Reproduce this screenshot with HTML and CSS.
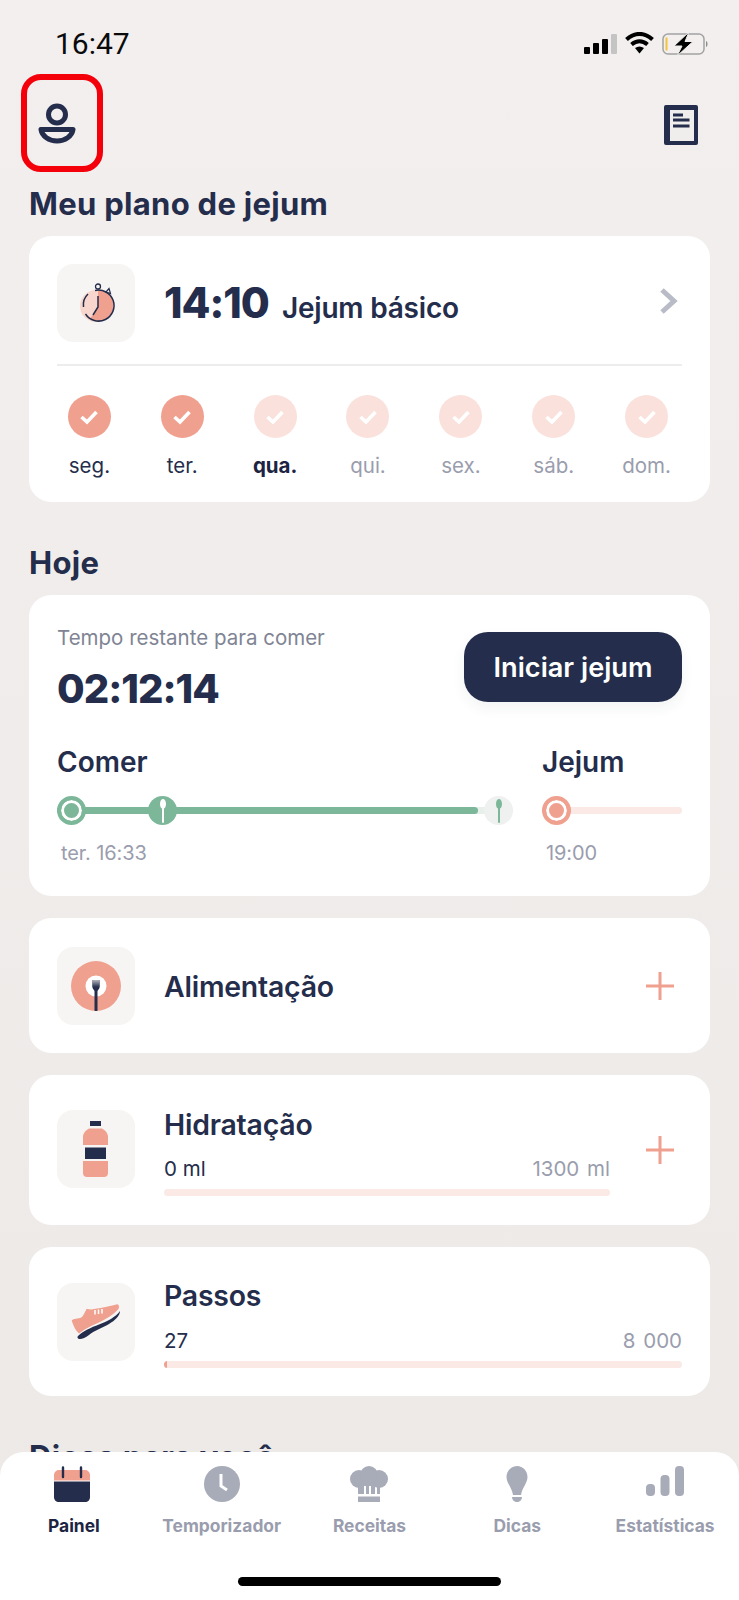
FILE: index.html
```html
<!DOCTYPE html>
<html lang="pt">
<head>
<meta charset="utf-8">
<title>Painel</title>
<link rel="stylesheet" href="styles.css">
</head>
<body>
<div class="screen">
  <div class="status">
    <span class="clock">16:47</span>
    <div class="status-icons">
      <svg class="sig" width="33" height="20" viewBox="0 0 33 20"><rect x="0" y="13" width="6" height="7" rx="1"/><rect x="9" y="9" width="6" height="11" rx="1"/><rect x="18" y="5" width="6" height="15" rx="1"/><rect x="27" y="0" width="6" height="20" rx="1" fill="#c4c4c4"/></svg>
      <svg class="wifi" width="29" height="22" viewBox="0 0 29 22"><path d="M1.500 7.500C9.500 0 19.500 0 27.500 7.500" fill="none" stroke="#000" stroke-width="4"/><path d="M6.500 12.500C11.500 8.300 17.500 8.300 22.500 12.500" fill="none" stroke="#000" stroke-width="4"/><path d="M10 16C13 14 16 14 19 16L14.500 21.500Z"/></svg>
      <svg class="batt" width="47" height="24" viewBox="0 0 47 24"><rect x="1" y="2" width="41" height="20" rx="5" fill="none" stroke="#a3a3a3" stroke-width="1.500"/><rect x="3.500" y="5.500" width="2" height="13" fill="#f5c33b"/><path d="M44 9c2 .5 2 5.500 0 6z" fill="#8c8c8c"/><path d="M27 0 L12 14 H20 L15 24 L31 9.500 H23Z" stroke="#f0eeed" stroke-width="1"/></svg>
    </div>
  </div>

  <div class="topbar">
    <button class="profile" type="button" aria-label="Perfil">
      <svg width="38" height="42" viewBox="0 0 38 42"><circle cx="19" cy="12.500" r="8.500" fill="none" stroke="#242d4b" stroke-width="5"/><path d="M3 27.500H35C34 34 27 39 19 39S4 34 3 27.500Z" fill="none" stroke="#242d4b" stroke-width="5" stroke-linejoin="round"/></svg>
    </button>
    <svg class="book" width="34" height="40" viewBox="0 0 34 40"><rect width="34" height="40" rx="2" fill="#242d4b"/><rect x="6" y="5" width="24" height="31" fill="#f0eeed"/><path d="M9 10H19M9 15H25.500M9 21H25.500" stroke="#242d4b" stroke-width="2.800"/></svg>
  </div>

  <main class="content">
    <h2 class="section first">Meu plano de jejum</h2>
    <section class="card plan">
      <div class="plan-head">
        <div class="tile">
          <svg width="40" height="40" viewBox="0 0 40 40"><circle cx="20" cy="23" r="16" fill="#f8d6ce"/><path d="M22 7a15.500 15.500 0 0 1 0 31 15.500 15.500 0 0 1-8-2.200L22 24Z" fill="#f0a08e"/><path d="M19 7.500A15.500 15.500 0 1 1 9.500 31" fill="none" stroke="#242d4b" stroke-width="1.500"/><path d="M7.500 24A15 15 0 0 1 12 11" fill="none" stroke="#242d4b" stroke-width="1.500"/><path d="M22 13V24L17 32" fill="none" stroke="#242d4b" stroke-width="1.500"/><circle cx="22" cy="3.500" r="2.500" fill="none" stroke="#242d4b" stroke-width="1.300"/><path d="M33 5.500l1.500 5-4.500-1.500z" fill="none" stroke="#242d4b" stroke-width="1.200"/></svg>
        </div>
        <div class="plan-title"><span class="ratio">14:10</span><span class="plan-name">Jejum básico</span></div>
        <svg class="chev" width="20" height="28" viewBox="0 0 20 28"><path d="M4 3L16 14L4 25" fill="none" stroke="#b9bcc7" stroke-width="5"/></svg>
      </div>
      <div class="days">
        <div class="day done"><span class="dot"><svg width="22" height="18" viewBox="0 0 22 18"><path d="M3.500 9L9 14L18.500 4" fill="none" stroke="#fff" stroke-width="3.600"/></svg></span><span class="day-label">seg.</span></div>
        <div class="day done"><span class="dot"><svg width="22" height="18" viewBox="0 0 22 18"><path d="M3.500 9L9 14L18.500 4" fill="none" stroke="#fff" stroke-width="3.600"/></svg></span><span class="day-label">ter.</span></div>
        <div class="day today"><span class="dot"><svg width="22" height="18" viewBox="0 0 22 18"><path d="M3.500 9L9 14L18.500 4" fill="none" stroke="#fff" stroke-width="3.600"/></svg></span><span class="day-label">qua.</span></div>
        <div class="day"><span class="dot"><svg width="22" height="18" viewBox="0 0 22 18"><path d="M3.500 9L9 14L18.500 4" fill="none" stroke="#fff" stroke-width="3.600"/></svg></span><span class="day-label">qui.</span></div>
        <div class="day"><span class="dot"><svg width="22" height="18" viewBox="0 0 22 18"><path d="M3.500 9L9 14L18.500 4" fill="none" stroke="#fff" stroke-width="3.600"/></svg></span><span class="day-label">sex.</span></div>
        <div class="day"><span class="dot"><svg width="22" height="18" viewBox="0 0 22 18"><path d="M3.500 9L9 14L18.500 4" fill="none" stroke="#fff" stroke-width="3.600"/></svg></span><span class="day-label">sáb.</span></div>
        <div class="day"><span class="dot"><svg width="22" height="18" viewBox="0 0 22 18"><path d="M3.500 9L9 14L18.500 4" fill="none" stroke="#fff" stroke-width="3.600"/></svg></span><span class="day-label">dom.</span></div>
      </div>
    </section>

    <h2 class="section">Hoje</h2>
    <section class="card today-card">
      <div class="today-top">
        <div>
          <div class="remain-label">Tempo restante para comer</div>
          <div class="remain">02:12:14</div>
        </div>
        <button class="start" type="button">Iniciar jejum</button>
      </div>
      <div class="phases">
        <div class="phase">
          <div class="phase-title">Comer</div>
          <div class="track eat">
            <div class="fill" style="width:421px"></div>
            <span class="ring ring-eat"></span>
            <span class="knob knob-now"><svg width="8" height="24" viewBox="0 0 8 24"><ellipse cx="4" cy="5" rx="3" ry="5" fill="#fff"/><rect x="3" y="8" width="2" height="16" rx="1" fill="#fff"/></svg></span>
            <span class="knob knob-end"><svg width="8" height="24" viewBox="0 0 8 24"><ellipse cx="4" cy="5" rx="3" ry="5" fill="#7db79a"/><rect x="3" y="8" width="2" height="16" rx="1" fill="#7db79a"/></svg></span>
          </div>
          <div class="phase-time">ter. 16:33</div>
        </div>
        <div class="phase">
          <div class="phase-title">Jejum</div>
          <div class="track fast">
            <span class="ring ring-fast"></span>
          </div>
          <div class="phase-time">19:00</div>
        </div>
      </div>
    </section>

    <section class="card row food">
      <div class="tile">
        <svg width="50" height="50" viewBox="0 0 50 50"><defs><clipPath id="plate"><circle cx="25" cy="25" r="25"/></clipPath><linearGradient id="fork" x1="0" y1="0" x2="0" y2="1"><stop offset="0" stop-color="#b4b5bd"/><stop offset="1" stop-color="#242d4b"/></linearGradient></defs><circle cx="25" cy="25" r="25" fill="#f0a08e"/><circle cx="25" cy="25" r="10.500" fill="#fff"/><g clip-path="url(#plate)"><path d="M21.500 19h7v8l-2 3V50h-3V30l-2-3z" fill="#242d4b"/><path d="M21.500 19h7v7h-7z" fill="url(#fork)"/></g></svg>
      </div>
      <div class="row-body"><div class="row-title">Alimentação</div></div>
      <svg class="plus" width="30" height="30" viewBox="0 0 30 30"><path d="M15 1V29M1 15H29" stroke="#f0a08e" stroke-width="3"/></svg>
    </section>

    <section class="card row stat">
      <div class="tile">
        <svg width="26" height="56" viewBox="0 0 26 56"><rect x="7" y="0" width="11" height="5" fill="#242d4b"/><path d="M6 7.500H19C22 9 25 12 25 16V24H0V16C0 12 3 9 6 7.500Z" fill="#f0a08e"/><rect x="2" y="26.500" width="21" height="11.500" fill="#242d4b"/><path d="M0 40H25V52C25 54.500 23.500 56 21 56H4C1.500 56 0 54.500 0 52Z" fill="#f0a08e"/></svg>
      </div>
      <div class="row-body">
        <div class="row-title">Hidratação</div>
        <div class="values"><span class="val">0 ml</span><span class="goal">1300 ml</span></div>
        <div class="bar"></div>
      </div>
      <svg class="plus" width="30" height="30" viewBox="0 0 30 30"><path d="M15 1V29M1 15H29" stroke="#f0a08e" stroke-width="3"/></svg>
    </section>

    <section class="card row stat steps">
      <div class="tile">
        <svg width="50" height="36" viewBox="0 0 50 36"><path d="M.7 16.300C4 14 9 15 11 13C12.500 11 13.500 9 15.700 4.700C18 5 20 6 23 5C32 4 40 2 46.300 .3C48 .5 48.500 3 47.500 5C42 11 35 15 28 18.500C20 22 13 25 8 29.500C4.700 27 2 21 .7 16.300Z" fill="#f0a08e"/><path d="M7 32C12 27 20 23.500 28 20.500C36 17.500 45 13 49 7C49 11.500 44 16.500 38 20C31 24 24 26 18 31C14 34 10.500 35.500 8 35C6.500 34.500 6 33 7 32Z" fill="#242d4b"/><path d="M24 6V10.500M27.500 5.500V10M31 5V9.500" stroke="#fff" stroke-width="1.500"/></svg>
      </div>
      <div class="row-body">
        <div class="row-title">Passos</div>
        <div class="values"><span class="val">27</span><span class="goal">8 000</span></div>
        <div class="bar"><div class="bar-fill" style="width:3px"></div></div>
      </div>
    </section>

    <h2 class="section">Dicas para você</h2>
  </main>

  <nav class="tabs">
    <div class="tab active">
      <svg class="tab-cal" width="36" height="36" viewBox="0 0 36 36"><path d="M5 4H31C33.500 4 36 6 36 9V14.500H0V9C0 6 2.500 4 5 4Z" fill="#f0a08e"/><path d="M0 15.500H36V31C36 34 34 36 31 36H5C2 36 0 34 0 31Z" fill="#242d4b"/><path d="M9 1.500V11M27 1.500V11" stroke="#242d4b" stroke-width="2.400" stroke-linecap="round"/></svg>
      <span>Painel</span>
    </div>
    <div class="tab">
      <svg width="36" height="36" viewBox="0 0 36 36"><circle cx="18" cy="18" r="18" fill="#a8abb8"/><path d="M17 8V20L23 24" fill="none" stroke="#fff" stroke-width="3"/></svg>
      <span>Temporizador</span>
    </div>
    <div class="tab">
      <svg width="38" height="36" viewBox="0 0 38 36"><circle cx="9" cy="13" r="9" fill="#a8abb8"/><circle cx="29" cy="13" r="9" fill="#a8abb8"/><circle cx="19" cy="9" r="9" fill="#a8abb8"/><path d="M8 17H30V28H27V20H25V28H21V20H19V28H16V20H14V28H8Z" fill="#a8abb8"/><rect x="8" y="30.500" width="22" height="5.500" fill="#a8abb8"/></svg>
      <span>Receitas</span>
    </div>
    <div class="tab">
      <svg width="22" height="36" viewBox="0 0 22 36"><path d="M11 0C17 0 21.500 5 21.500 11C21.500 17 16 22 15 29H7C6 22 .5 17 .5 11C.5 5 5 0 11 0Z" fill="#a8abb8"/><path d="M6 31H16C16 34 13.500 36 11 36C8.500 36 6 34 6 31Z" fill="#a8abb8"/></svg>
      <span>Dicas</span>
    </div>
    <div class="tab">
      <svg width="38" height="36" viewBox="0 0 38 36"><rect x="0" y="18" width="9" height="12" rx="4" fill="#a8abb8"/><rect x="14.500" y="9" width="9" height="21" rx="4" fill="#a8abb8"/><rect x="29" y="0" width="9" height="30" rx="4" fill="#a8abb8"/></svg>
      <span>Estatísticas</span>
    </div>
    <div class="home"></div>
  </nav>
</div>
</body>
</html>
```
FILE: styles.css
```css
* { box-sizing: border-box; }
html, body { margin: 0; padding: 0; }
body { font-family: Inter, "Noto Sans", sans-serif; color: #242d4b; }
button { font: inherit; }

.screen {
  position: relative;
  width: 739px;
  height: 1600px;
  overflow: hidden;
  background: linear-gradient(#f2efee, #ece9e7);
}

.status {
  height: 74px;
  display: flex;
  justify-content: space-between;
  padding: 26px 30px 0 55px;
}
.clock { font-size: 30px; line-height: 36px; font-weight: 400; color: #0b0b0b; font-family: Roboto, sans-serif; }
.status-icons { display: flex; align-items: flex-start; padding-top: 8px; gap: 8px; }
.wifi { margin-top: -2px; }
.batt { margin-top: -2px; }

.topbar {
  height: 98px;
  display: flex;
  justify-content: space-between;
  align-items: center;
  padding: 0 41px 0 21px;
}
.profile {
  width: 82px;
  height: 98px;
  background: none;
  border: 6px solid #f4000b;
  border-radius: 20px;
  padding: 0 10px 0 0;
  display: flex;
  align-items: center;
  justify-content: center;
}
.book { margin-top: 3px; }

.content { padding: 0 29px; }

.section {
  margin: 43px 0 14px;
  font-size: 31px;
  line-height: 36px;
  font-weight: 700;
  letter-spacing: 0.3px;
  color: #242d4b;
}
.section.first { margin-top: 14px; }

.card {
  background: #fff;
  border-radius: 22px;
  padding: 28px;
}

.tile {
  width: 78px;
  height: 78px;
  flex: none;
  border-radius: 16px;
  background: #f7f5f4;
  display: flex;
  align-items: center;
  justify-content: center;
}

.plan { height: 266px; }
.plan-head {
  display: flex;
  align-items: center;
  padding-bottom: 22px;
  border-bottom: 2px solid #eeeded;
}
.plan-title { flex: 1; margin-left: 29px; display: flex; align-items: baseline; gap: 13px; }
.ratio { font-size: 42px; line-height: 54px; font-weight: 800; letter-spacing: -1px; }
.plan-name { font-size: 28px; font-weight: 600; letter-spacing: -0.2px; }
.chev { margin: -5px 4px 0 0; }

.days {
  display: grid;
  grid-template-columns: repeat(7, 1fr);
  margin: 0 -11px 0 -14px;
  padding-top: 29px;
}
.day { display: flex; flex-direction: column; align-items: center; gap: 16px; }
.dot {
  width: 43px;
  height: 43px;
  border-radius: 50%;
  background: #fae1dc;
  display: flex;
  align-items: center;
  justify-content: center;
}
.day.done .dot { background: #f0a08e; }
.day-label { font-size: 20.5px; line-height: 24px; color: #9a9dad; }
.day.done .day-label { color: #242d4b; }
.day.today .day-label { color: #1c2442; font-weight: 700; }

.today-card { margin-top: 0; padding-top: 30px; height: 301px; }
.today-top { display: flex; justify-content: space-between; align-items: flex-start; }
.remain-label { font-size: 20.5px; line-height: 26px; color: #7f8494; }
.remain { margin-top: 13px; font-size: 40px; line-height: 50px; font-weight: 800; letter-spacing: -1px; }
.start {
  margin-top: 7px;
  width: 218px;
  height: 70px;
  border: 0;
  border-radius: 24px;
  background: #242d4b;
  color: #fff;
  font-size: 27.200px;
  font-weight: 600;
  box-shadow: 0 6px 14px rgba(36, 45, 75, 0.06);
}
.phases { display: grid; grid-template-columns: 456px 140px; gap: 29px; margin-top: 32px; }
.phase-title { font-size: 28px; line-height: 32px; font-weight: 600; }
.track { position: relative; height: 29px; margin-top: 18px; }
.track::before {
  content: "";
  position: absolute;
  left: 0;
  right: 0;
  top: 11px;
  height: 7px;
  border-radius: 4px;
  background: #fbe9e6;
}
.track.eat::before { background: #e9f0ec; }
.fill { position: absolute; left: 0; top: 11px; height: 7px; border-radius: 4px; background: #7db79a; }
.ring {
  position: absolute;
  left: 0;
  top: 0;
  width: 29px;
  height: 29px;
  border-radius: 50%;
  background: #7db79a;
  border: 4px solid #7db79a;
  box-shadow: inset 0 0 0 3px #fff;
}
.ring-fast { background: #f0a08e; border-color: #f0a08e; }
.knob {
  position: absolute;
  top: 0;
  width: 29px;
  height: 29px;
  border-radius: 50%;
  display: flex;
  align-items: center;
  justify-content: center;
}
.knob-now { left: 91px; background: #7db79a; }
.knob-end { right: 0; background: #eef1ef; }
.phase-time { margin-top: 16px; padding-left: 4px; font-size: 20px; line-height: 24px; letter-spacing: -0.1px; color: #9a9dad; }

.row { display: flex; align-items: flex-start; margin-top: 22px; }
.row-body { flex: 1; margin-left: 29px; }
.row-title { font-size: 28.400px; line-height: 34px; font-weight: 600; letter-spacing: -0.2px; }
.plus { flex: none; margin-left: 35px; margin-right: 7px; }

.food { height: 135px; padding-top: 28px; align-items: center; padding-bottom: 28px; }
.food .row-title { margin-top: 3px; }

.stat { height: 150px; padding-top: 33px; }
.stat .tile { margin-top: 2px; }
.stat .plus { margin-top: 27px; }
.values { display: flex; justify-content: space-between; margin-top: 15px; font-size: 20.5px; line-height: 24px; }
.val { color: #242d4b; }
.goal { color: #9a9dad; word-spacing: 2px; }
.bar { margin-top: 8px; height: 7px; border-radius: 4px; background: #fbe9e6; overflow: hidden; }
.bar-fill { height: 100%; background: #f0a08e; }
.steps { height: 149px; padding-top: 32px; }
.steps .tile { margin-top: 4px; }
.steps .values { margin-top: 16px; }

.tabs {
  position: absolute;
  left: 0;
  right: 0;
  bottom: 0;
  height: 148px;
  padding-top: 14px;
  background: #fff;
  border-radius: 24px 24px 0 0;
  display: grid;
  grid-template-columns: repeat(5, 1fr);
  align-items: start;
}
.tab {
  display: flex;
  flex-direction: column;
  align-items: center;
  gap: 13px;
  font-size: 17.400px;
  line-height: 22px;
  font-weight: 700;
  color: #9a9dad;
  white-space: nowrap;
}
.tab.active { color: #1c2442; }
.tab-cal { margin-right: 3px; }
.home {
  position: absolute;
  left: 238px;
  bottom: 14px;
  width: 263px;
  height: 9px;
  border-radius: 5px;
  background: #000;
}
```
